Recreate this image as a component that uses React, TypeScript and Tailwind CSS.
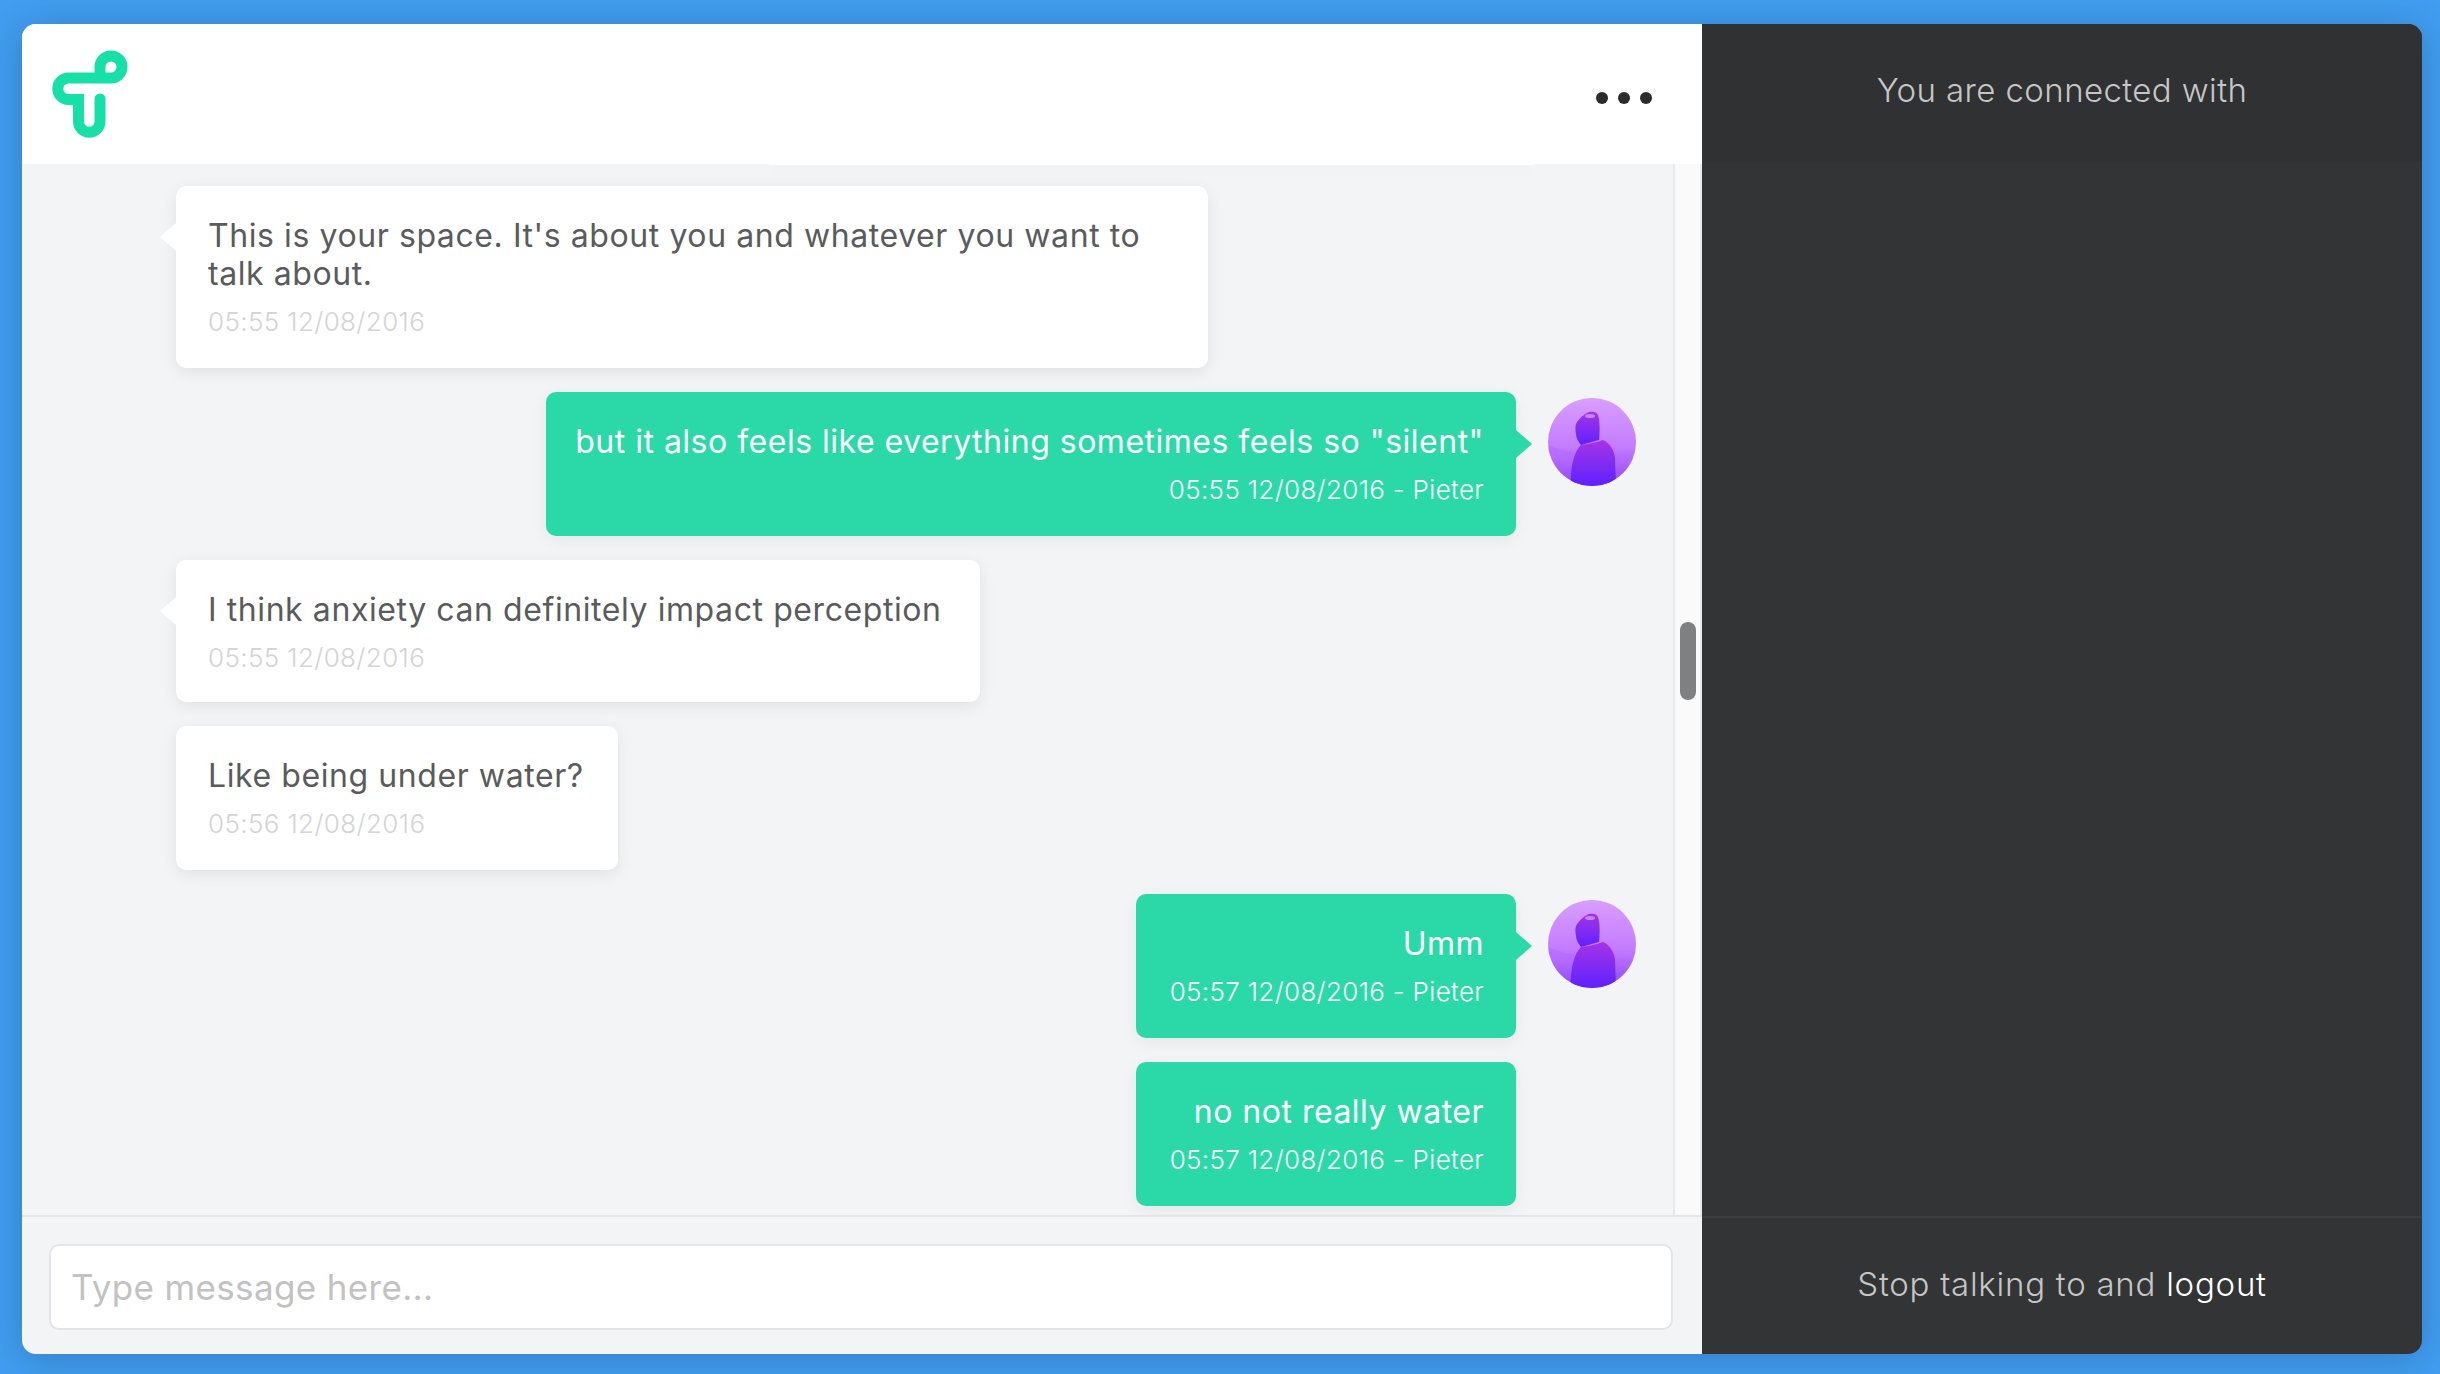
const font = "font-['Inter','Liberation_Sans',sans-serif]";

function Logo() {
  return (
    <svg width="140" height="140" viewBox="22 24 140 140" className="shrink-0" aria-label="logo">
      <path
        d="M100 99V121.5A10.75 10.75 0 0 1 78.5 121.5V99.5H68.5A10.75 10.75 0 0 1 68.5 78H111A11 11 0 1 0 100 67V78"
        fill="none"
        stroke="#17dfa8"
        strokeWidth="11"
        strokeLinecap="round"
      />
    </svg>
  );
}

function Avatar({ id }: { id: string }) {
  return (
    <svg width="88" height="88" viewBox="0 0 88 88" className="shrink-0 ml-[32px] mt-[6px]">
      <defs>
        <linearGradient id={id} x1="0" y1="0" x2="0" y2="1">
          <stop offset="0" stopColor="#d99eff" />
          <stop offset="0.55" stopColor="#c47cff" />
          <stop offset="1" stopColor="#8f45ff" />
        </linearGradient>
        <linearGradient id={id + "b"} x1="0" y1="0" x2="0" y2="1">
          <stop offset="0" stopColor="#a733e8" />
          <stop offset="0.55" stopColor="#7e2bf2" />
          <stop offset="1" stopColor="#5f20ff" />
        </linearGradient>
        <clipPath id={id + "c"}>
          <circle cx="44" cy="44" r="44" />
        </clipPath>
      </defs>
      <g clipPath={`url(#${id}c)`}>
        <rect width="88" height="88" fill={`url(#${id})`} />
        <path d="M0 47C18 54 34 58 88 60V66C50 66 20 62 0 56Z" fill="#b368ff" opacity="0.5" />
        <path
          d="M41 14C45 13 49 14 50 17C52 23 52 34 51 42L33 47C30 43 28 40 28 36C27 31 27 27 29 24C32 20 36 16 41 14Z"
          fill={`url(#${id}b)`}
        />
        <ellipse cx="42" cy="18" rx="5" ry="2" fill="#c884f0" />
        <path
          d="M33 47C36 47 50 44 55 42C62 45 66 52 67 60L68 88H22L23 76C24 66 26 54 33 47Z"
          fill={`url(#${id}b)`}
        />
      </g>
    </svg>
  );
}

function Them({ text, time, w, tail, pb }: { text: string; time: string; w: string; tail?: boolean; pb: string }) {
  return (
    <div className={`relative shrink-0 bg-white rounded-[10px] shadow-[0_4px_16px_rgba(0,0,0,0.08)] pl-[32px] pr-[20px] pt-[31px] self-start ${pb} ${w}`}>
      {tail && (
        <div className="absolute left-[-16px] top-[37px] w-0 h-0 border-y-[14px] border-y-transparent border-r-[16px] border-r-white" />
      )}
      <div className="text-[32px] leading-[38px] font-normal tracking-[0.58px] text-[#5a5b5d]">{text}</div>
      <div className="mt-[10px] text-[26px] leading-[38px] font-light tracking-[0.38px] text-[#d4d4d4]">{time}</div>
    </div>
  );
}

function Me({ text, time, w, avatar, id }: { text: string; time: string; w: string; avatar?: boolean; id?: string }) {
  return (
    <div className="flex shrink-0 justify-end pr-[37px]">
      <div className={`relative bg-[#2bd9a8] rounded-[10px] shadow-[0_4px_16px_rgba(0,0,0,0.06)] pl-[20px] pr-[32px] pt-[31px] pb-[27px] text-right text-white ${w}`}>
        {avatar && (
          <div className="absolute right-[-16px] top-[38px] w-0 h-0 border-y-[14px] border-y-transparent border-l-[16px] border-l-[#2bd9a8]" />
        )}
        <div className="text-[32px] leading-[38px] font-normal tracking-[0.5px] whitespace-nowrap">{text}</div>
        <div className="mt-[10px] text-[26px] leading-[38px] font-light tracking-[0.33px] whitespace-nowrap">{time}</div>
      </div>
      {avatar ? <Avatar id={id!} /> : <div className="w-[88px] ml-[32px] shrink-0" />}
    </div>
  );
}

export default function App() {
  return (
    <div className={`w-[2440px] h-[1374px] overflow-hidden bg-[#419df0] pt-[24px] pl-[22px] ${font}`}>
      <div className="w-[2400px] h-[1330px] rounded-[14px] overflow-hidden flex shadow-[0_4px_36px_rgba(0,0,0,0.2)]">
        <div className="w-[1680px] flex flex-col bg-[#f3f4f6]">
          <header className="h-[140px] shrink-0 bg-white flex items-center justify-between pr-[50px]">
            <Logo />
            <div className="flex gap-[10px] mt-[8px]">
              <div className="w-[12px] h-[12px] rounded-full bg-[#2c2c2c]" />
              <div className="w-[12px] h-[12px] rounded-full bg-[#2c2c2c]" />
              <div className="w-[12px] h-[12px] rounded-full bg-[#2c2c2c]" />
            </div>
          </header>
          <div className="flex h-[1051px] shrink-0 overflow-hidden">
            <div className="w-[1653px] shrink-0 border-r-2 border-[#e8e9ea] pl-[154px] flex flex-col gap-[24px] overflow-hidden">
              <div className="shrink-0 self-start h-[1px] -mb-[3px] ml-[593px] w-[765px] bg-white shadow-[0_4px_16px_rgba(0,0,0,0.1)]" />
              <Them
                tail
                pb="pb-[27px]"
                w="w-[1032px]"
                text="This is your space. It's about you and whatever you want to talk about."
                time="05:55 12/08/2016"
              />
              <Me avatar id="a1" w="w-[970px]" text={'but it also feels like everything sometimes feels so "silent"'} time="05:55 12/08/2016 - Pieter" />
              <Them tail pb="pb-[25px]" w="w-[804px]" text="I think anxiety can definitely impact perception" time="05:55 12/08/2016" />
              <Them pb="pb-[27px]" w="w-[442px]" text="Like being under water?" time="05:56 12/08/2016" />
              <Me avatar id="a2" w="w-[380px]" text="Umm" time="05:57 12/08/2016 - Pieter" />
              <Me w="w-[380px]" text="no not really water" time="05:57 12/08/2016 - Pieter" />
            </div>
            <div className="w-[27px] shrink-0 bg-[#fafafa] border-r-2 border-[#ececed] pl-[5px] pt-[458px]">
              <div className="w-[16px] h-[78px] rounded-full bg-[#7f8082]" />
            </div>
          </div>
          <div className="flex-1 border-t-2 border-[#e4e5e7] pl-[27px] pr-[29px] pt-[27px]">
            <input
              className="w-full h-[86px] rounded-[10px] border-2 border-[#e3e4e6] bg-white px-[20px] text-[35px] tracking-[0.35px] font-normal text-[#5a5b5d] outline-none placeholder:text-[#c2c2c2]"
              placeholder="Type message here..."
            />
          </div>
        </div>
        <aside className="w-[720px] flex flex-col bg-[#333436] font-light">
          <div className="h-[138px] shrink-0 bg-[#303133] flex items-center justify-center text-[33px] tracking-[0.4px] text-[#c6c6c6] pb-[4px]">
            You are connected with
          </div>
          <div className="flex-1" />
          <div className="h-[138px] shrink-0 border-t-2 border-[#3c3d3f] flex items-center justify-center text-[33px] tracking-[0.75px] text-[#c6c6c6] pb-[2px]">
            <span>Stop talking to and&nbsp;</span>
            <span className="text-white">logout</span>
          </div>
        </aside>
      </div>
    </div>
  );
}
